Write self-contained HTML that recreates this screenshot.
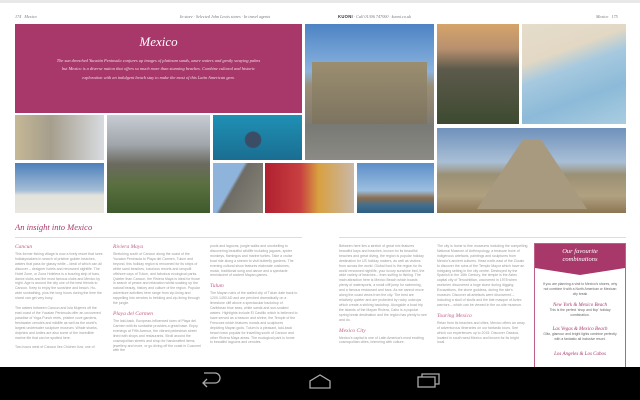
<!DOCTYPE html>
<html><head><meta charset="utf-8"><style>
*{margin:0;padding:0;box-sizing:border-box}
body{width:640px;height:400px;overflow:hidden;background:#fff;position:relative;font-family:"Liberation Serif",serif}
.a{position:absolute}
.hdr{font-style:italic;font-size:4.2px;color:#777;top:14px}
.img{position:absolute}
.col{position:absolute;font-family:"Liberation Sans",sans-serif;font-size:3.5px;line-height:4.9px;color:#9a9a9a;width:88px}
.col h4{font-family:"Liberation Serif",serif;font-style:italic;font-weight:normal;color:#c0608a;font-size:5.5px;line-height:7px;margin-bottom:1px}
.col p{margin-bottom:5px}
</style></head><body>
<div class="a" style="left:0;top:0;width:640px;height:3px;background:#e8e8e8"></div>
<div class="a hdr" style="left:15px">174 &nbsp; Mexico</div>
<div class="a hdr" style="left:180px">In store · Selected John Lewis stores · In travel agents</div>
<div class="a hdr" style="left:338px"><b style="font-family:'Liberation Sans';font-style:normal;color:#333;letter-spacing:.3px">KUONI</b> · Call 01306 747000 · kuoni.co.uk</div>
<div class="a hdr" style="left:596px">Mexico &nbsp; 175</div>

<div class="a" style="left:15px;top:24px;width:287px;height:89px;background:#a8386a;color:#f4dce6;text-align:center">
<div style="font-style:italic;font-size:13px;margin-top:10px;color:#fff">Mexico</div>
<div style="font-style:italic;font-size:4.4px;line-height:8.3px;margin:7px 40px 0">The sun drenched Yucatán Peninsula conjures up images of platinum sands, azure waters and gently swaying palms but Mexico is a diverse nation that offers so much more than stunning beaches. Combine cultural and historic exploration with an indulgent beach stay to make the most of this Latin American gem.</div></div>

<div class="img" style="left:305px;top:24px;width:129px;height:136px;background:linear-gradient(#4d83c4 0%,#8ab3de 35%,#9a8f78 45%,#8a8070 65%,#787a76 75%,#8c8a84 100%)"></div>
<div class="img" style="left:312px;top:62px;width:115px;height:62px;background:linear-gradient(#9b8e70,#7d7460)"></div>
<div class="img" style="left:437px;top:24px;width:82px;height:100px;background:linear-gradient(#d6a46a 0%,#b7906e 25%,#5d5a4c 45%,#3d4a30 100%)"></div>
<div class="img" style="left:522px;top:24px;width:104px;height:100px;background:linear-gradient(160deg,#e6dccb 0%,#e2d8c4 30%,#a6c9df 45%,#8cbad8 70%,#a9cde0 100%)"></div>
<div class="img" style="left:437px;top:128px;width:189px;height:85px;background:linear-gradient(#6f91bb 0%,#a9bfd6 40%,#9b9074 55%,#b0a181 80%,#8c7553 100%)"></div>
<div class="img" style="left:477px;top:139px;width:110px;height:70px;background:#a89a7e;clip-path:polygon(42% 0,58% 0,100% 100%,0 100%)"></div>

<div class="img" style="left:15px;top:115px;width:89px;height:45px;background:linear-gradient(90deg,#c6b896 0%,#a59e8c 40%,#d8dbe0 100%)"></div>
<div class="img" style="left:107px;top:115px;width:103px;height:98px;background:linear-gradient(#c8ccd4 0%,#a0a6ac 30%,#6c6a60 50%,#5b7040 70%,#3f5a2c 100%)"></div>
<div class="img" style="left:213px;top:115px;width:89px;height:45px;background:radial-gradient(circle at 45% 55%,#3b4c66 0 14%,transparent 16%),linear-gradient(#1f90b4,#1a6e92)"></div>
<div class="img" style="left:15px;top:163px;width:89px;height:50px;background:linear-gradient(#4e80bc 0%,#a5bed6 55%,#e4e4dc 65%,#e8e6de 100%)"></div>
<div class="img" style="left:213px;top:163px;width:50px;height:50px;background:linear-gradient(120deg,#8fb4dc 0 40%,#6e6c64 45%,#8a877c 100%)"></div>
<div class="img" style="left:265px;top:163px;width:89px;height:50px;background:linear-gradient(90deg,#b02030 0%,#c84040 40%,#d8a040 60%,#c9b8a8 100%)"></div>
<div class="img" style="left:357px;top:163px;width:77px;height:50px;background:linear-gradient(#5c8ec8 0%,#9cbfe0 55%,#8b6e50 70%,#3f6e8e 85%,#2f5e80 100%)"></div>

<div class="a" style="left:15px;top:222px;font-style:italic;font-size:8.5px;color:#a8386a">An insight into Mexico</div>
<div class="a" style="left:15px;top:237px;width:287px;height:1px;background:#ddd"></div>
<div class="a" style="left:339px;top:237px;width:287px;height:1px;background:#ddd"></div>

<div class="col" style="left:15px;top:244px"><h4>Cancun</h4><p>This former fishing village is now a lively resort that lures holidaymakers in search of pristine golden beaches, waters that pass for glassy white – ideal of which can all discover – designer hotels and renowned nightlife. The Hotel Zone, or Zona Hotelera is a buzzing strip of bars, dance clubs and the most famous clubs and Mexico by night. Age is around the city one of the best friends to Cancun. Keep to enjoy the sunshine and beach. Ho-wide sunbathing, plus the long hours during the time the nicest can get very busy.</p><p>The waters between Cancun and Isla Mujeres off the east coast of the Yucatan Peninsula offer an uncovered paradise of Yoga-Punch reefs, pristine cove gardens, freshwater cenotes and wildlife as well as the world's largest underwater sculpture museum. Whale sharks, dolphins and turtles are also some of the incredible marine life that can be spotted here.</p><p>Two hours west of Cancun lies Chichen Itza, one of</p></div>
<div class="col" style="left:113px;top:244px"><h4>Riviera Maya</h4><p>Stretching south of Cancun along the coast of the Yucatan Peninsula to Playa del Carmen, Tulum and beyond, this holiday region is renowned for its strips of white sand beaches, luxurious resorts and unspoilt offshore cays of Tulum, and fabulous ecological parks. Quieter than Cancun, the Riviera Maya is ideal for those in search of peace and relaxation whilst soaking up the natural beauty, history and culture of the region. Popular adventure activities here range from zip-lining and rappelling into cenotes to trekking and zip-lining through the jungle.</p><h4>Playa del Carmen</h4><p>The laid-back, European-influenced town of Playa del Carmen with its sunbathe provides a great base. Enjoy evenings at Fifth Avenue, the vibrant pedestrian street lined with shops and restaurants. Stroll around the cosmopolitan streets and shop for handcrafted items, jewellery and more, or go diving off the coast in Cozumel with the</p></div>
<div class="col" style="left:210px;top:244px"><p>pools and lagoons, jungle walks and snorkelling to discovering beautiful wildlife including jaguars, spider monkeys, flamingos and marine turtles. Take a cruise boat ride along a stream to visit butterfly gardens. The evening cultural show features elaborate costumes, music, traditional song and dance and a spectacle reminiscent of ancient Mayan games.</p><h4>Tulum</h4><p>The Mayan ruins of the walled city of Tulum date back to 1200-1450 AD and are perched dramatically on a limestone cliff above a spectacular backdrop of Caribbean blue seas, white sands and sun-soaked waters. Highlights include El Castillo which is believed to have served as a beacon and shrine, the Temple of the Frescoes which features murals and sculptures depicting Mayan gods. Tulum is a pleasant, laid-back beach town popular for travelling south of Cancun and other Riviera Maya areas. The ecological park is home to beautiful lagoons and cenotes.</p></div>
<div class="col" style="left:339px;top:244px"><p>Between here lies a stretch of great mix features beautiful bays and beaches, known for its beautiful beaches and great diving, the region is popular holiday destination for US holiday makers, as well as visitors from across the world. Global food is the region for its world renowned nightlife, your luxury sunshine bed, the wide variety of beaches – from surfing to fishing. The main attraction here is Mexico Beach which boasts plenty of watersports, a small cliff jump for swimming, and a famous restaurant and bars. As we cannot move along the coast views from the city. The best are relatively quieter and are protected by rocky outcrops which create a striking backdrop. Alongside a boat trip the islands of the Mayan Riviera, Cabo is a popular spring break destination and the region has plenty to see and do.</p><h4>Mexico City</h4><p>Mexico's capital is one of Latin America's most exciting cosmopolitan cities, brimming with culture.</p></div>
<div class="col" style="left:437px;top:244px;width:91px"><p>The city is home to fine museums including the compelling National Museum of Anthropology, a treasure trove of indigenous artefacts, paintings and sculptures from Mexico's ancient cultures. Head north-east of the Zócalo to discover the ruins of the Templo Mayor which have an intriguing setting in the city centre. Destroyed by the Spanish in the 16th Century, the temple is the Aztec capital city of Tenochtitlan, uncovered in 1978 when workmen discovered a huge stone during digging. Excavations, the stone goddess, during the site's museum. Discover all artefacts were discovered – including a skull of skulls and the tide masque of Aztec warriors – which can be viewed in the on-site museum.</p><h4>Touring Mexico</h4><p>Relax from its beaches and cities, Mexico offers an array of adventurous itineraries on our fantastic tours. See which our experiences up to 2015. Discover Oaxaca, located in south west Mexico and known for its bright local.</p></div>

<div class="a" style="left:534px;top:243px;width:92px;height:130px;border:1px solid #c0608a;border-bottom:none;background:#fff;text-align:center">
<div style="background:#a8386a;height:24px;color:#fff;font-style:italic;font-size:6.5px;line-height:7.5px;padding-top:4px;position:relative">Our favourite<br>combinations
<div style="position:absolute;left:0;top:24px;width:0;height:0;border-left:45px solid transparent;border-right:45px solid transparent;border-top:7px solid #a8386a"></div></div>
<div style="font-family:'Liberation Sans';font-size:3.4px;line-height:5px;color:#666;margin:14px 6px 0">If you are planning a visit to Mexico's shores, why not combine it with a North American or Mexican city break</div>
<div style="font-style:italic;font-size:5px;color:#a8386a;margin-top:6px">New York &amp; Mexico Beach</div>
<div style="font-family:'Liberation Sans';font-size:3.4px;line-height:5px;color:#666;margin:0 10px">This is the perfect 'shop and flop' holiday combination.</div>
<div style="font-style:italic;font-size:5px;color:#a8386a;margin-top:9px">Las Vegas &amp; Mexico Beach</div>
<div style="font-family:'Liberation Sans';font-size:3.4px;line-height:5px;color:#666;margin:0 6px">Glitz, glamour and bright lights combine perfectly with a fantastic all inclusive resort.</div>
<div style="font-style:italic;font-size:5px;color:#a8386a;margin-top:10px">Los Angeles &amp; Los Cabos</div>
</div>

<div class="a" style="left:0;top:367px;width:640px;height:33px;background:#000"></div>
<svg class="a" style="left:0;top:367px" width="640" height="33">
<g fill="none" stroke="#aaa" stroke-width="1.3">
<path d="M203 16 H215 A5 5 0 0 0 215 6 H204 M207 12 L203 16 L207 20"/>
<path d="M310 21 V14 L320 8 L330 14 V21 Z"/>
<rect x="418" y="10" width="17" height="10"/><path d="M422 10 V7 H439 V17 H435"/>
</g></svg>
</body></html>
